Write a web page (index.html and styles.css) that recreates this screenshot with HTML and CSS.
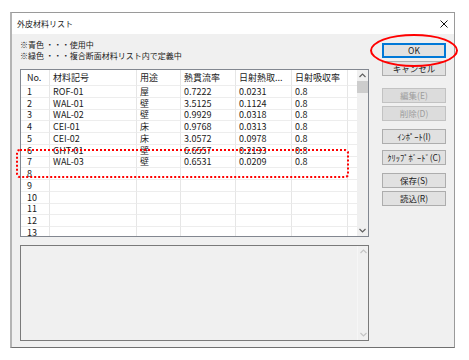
FILE: index.html
```html
<!DOCTYPE html>
<html lang="ja">
<head>
<meta charset="utf-8">
<title>外皮材料リスト</title>
<link rel="stylesheet" href="styles.css">
</head>
<body>
<div class="page">
  <div class="dialog">
    <div class="titlebar">
      <span class="title">外皮材料リスト</span>
      <svg class="close" width="8" height="8" viewBox="0 0 8 8"><path d="M0.5 0.5 L7.5 7.5 M7.5 0.5 L0.5 7.5" stroke="#111" stroke-width="1" fill="none"/></svg>
    </div>
    <div class="body">
      <div class="main">
        <div class="legend">
          <div>※青色 ・・・使用中</div>
          <div>※緑色 ・・・複合断面材料リスト内で定義中</div>
        </div>
        <div class="list">
          <div class="grid">
            <div class="c h first">No.</div><div class="c h">材料記号</div><div class="c h">用途</div><div class="c h">熱貫流率</div><div class="c h">日射熱取...</div><div class="c h">日射吸収率</div><div class="c h fill"></div>

            <div class="c first">1</div><div class="c">ROF-01</div><div class="c">屋</div><div class="c">0.7222</div><div class="c">0.0231</div><div class="c">0.8</div><div class="c fill"></div>
            <div class="c first">2</div><div class="c">WAL-01</div><div class="c">壁</div><div class="c">3.5125</div><div class="c">0.1124</div><div class="c">0.8</div><div class="c fill"></div>
            <div class="c first">3</div><div class="c">WAL-02</div><div class="c">壁</div><div class="c">0.9929</div><div class="c">0.0318</div><div class="c">0.8</div><div class="c fill"></div>
            <div class="c first">4</div><div class="c">CEI-01</div><div class="c">床</div><div class="c">0.9768</div><div class="c">0.0313</div><div class="c">0.8</div><div class="c fill"></div>
            <div class="c first">5</div><div class="c">CEI-02</div><div class="c">床</div><div class="c">3.0572</div><div class="c">0.0978</div><div class="c">0.8</div><div class="c fill"></div>
            <div class="c first">6</div><div class="c">GHT-01</div><div class="c">壁</div><div class="c">6.6557</div><div class="c">0.2133</div><div class="c">0.8</div><div class="c fill"></div>
            <div class="c first">7</div><div class="c">WAL-03</div><div class="c">壁</div><div class="c">0.6531</div><div class="c">0.0209</div><div class="c">0.8</div><div class="c fill"></div>
            <div class="c first">8</div><div class="c"></div><div class="c"></div><div class="c"></div><div class="c"></div><div class="c"></div><div class="c fill"></div>
            <div class="c first">9</div><div class="c"></div><div class="c"></div><div class="c"></div><div class="c"></div><div class="c"></div><div class="c fill"></div>
            <div class="c first">10</div><div class="c"></div><div class="c"></div><div class="c"></div><div class="c"></div><div class="c"></div><div class="c fill"></div>
            <div class="c first">11</div><div class="c"></div><div class="c"></div><div class="c"></div><div class="c"></div><div class="c"></div><div class="c fill"></div>
            <div class="c first">12</div><div class="c"></div><div class="c"></div><div class="c"></div><div class="c"></div><div class="c"></div><div class="c fill"></div>
            <div class="c first">13</div><div class="c"></div><div class="c"></div><div class="c"></div><div class="c"></div><div class="c"></div><div class="c fill"></div>
          </div>
          <div class="vscroll">
            <div class="arrow"><svg width="7" height="5" viewBox="0 0 7 5"><path d="M0.5 4 L3.5 1 L6.5 4" stroke="#606060" stroke-width="1.2" fill="none"/></svg></div>
            <div class="track"><div class="thumb"></div></div>
            <div class="arrow"><svg width="7" height="5" viewBox="0 0 7 5"><path d="M0.5 1 L3.5 4 L6.5 1" stroke="#606060" stroke-width="1.2" fill="none"/></svg></div>
          </div>
        </div>
        <div class="memo">
          <div class="vscroll off">
            <div class="arrow"><svg width="7" height="5" viewBox="0 0 7 5"><path d="M0.5 4 L3.5 1 L6.5 4" stroke="#c4c4c4" stroke-width="1.2" fill="none"/></svg></div>
            <div class="track"></div>
            <div class="arrow"><svg width="7" height="5" viewBox="0 0 7 5"><path d="M0.5 1 L3.5 4 L6.5 1" stroke="#c4c4c4" stroke-width="1.2" fill="none"/></svg></div>
          </div>
        </div>
      </div>
      <div class="buttons">
        <button class="btn default">OK</button>
        <button class="btn">キャンセル</button>
        <button class="btn disabled gap-12">編集(E)</button>
        <button class="btn disabled">削除(D)</button>
        <button class="btn gap-8">ｲﾝﾎﾟｰﾄ(I)</button>
        <button class="btn gap-6">ｸﾘｯﾌﾟﾎﾞｰﾄﾞ(C)</button>
        <button class="btn gap-8">保存(S)</button>
        <button class="btn">読込(R)</button>
      </div>
    </div>
    <div class="mark-ok"></div>
    <div class="mark-rows"></div>
  </div>
</div>
</body>
</html>
```
FILE: styles.css
```css
* { box-sizing: border-box; }
html, body { margin: 0; padding: 0; background: #fff; }
body {
  font-family: "Noto Sans CJK JP", "Noto Sans", sans-serif;
  color: #1a1a1a;
  font-weight: 400;
}
.page { padding: 12px 0 0 10px; }

.dialog {
  position: relative;
  width: 445px;
  height: 336px;
  border: 1px solid #9a9a9a;
  border-left: 2px solid #b4b4b4;
  border-bottom-color: #707070;
  background: #f0f0f0;
  display: flex;
  flex-direction: column;
}

.titlebar {
  height: 21px;
  flex: none;
  background: #fff;
  display: flex;
  align-items: center;
  justify-content: space-between;
  padding: 0 6px 0 5px;
  font-size: 8px;
  line-height: 1;
}
.close { display: block; }

.body {
  flex: 1;
  display: flex;
  padding: 5px 8px 6px 8px;
  gap: 13px;
}

.main {
  width: 349px;
  display: flex;
  flex-direction: column;
}

.legend {
  font-size: 8px;
  line-height: 11px;
  margin-bottom: 8px;
}

.list {
  height: 168px;
  flex: none;
  border: 1px solid #828790;
  background: #fff;
  display: flex;
  overflow: hidden;
}

.grid {
  width: 336px;
  display: grid;
  grid-template-columns: 29px 87px 44px 55px 56px 56px 9px;
  grid-template-rows: 16px repeat(13, 11.75px);
  align-content: start;
  overflow: hidden;
  font-size: 9px;
}

.c {
  border-right: 1px solid #e6e6e6;
  border-bottom: 1px solid #ededed;
  padding-left: 3px;
  white-space: nowrap;
  overflow: hidden;
  display: flex;
  align-items: center;
  line-height: 1;
}
.c.first { padding-left: 6px; }
.c.h { padding-left: 3px; }
.c.h.first { padding-left: 6px; }
.c.fill { border-right: none; }

.vscroll {
  width: 11px;
  flex: none;
  background: #f0f0f0;
  display: flex;
  flex-direction: column;
}
.vscroll .arrow {
  height: 11px;
  display: flex;
  align-items: center;
  justify-content: center;
}
.vscroll .track { flex: 1; }
.vscroll .thumb {
  height: 12px;
  background: #cdcdcd;
}
.vscroll.off {
  background: #f0f0f0;
  border-left: 1px solid #f6f6f6;
}

.memo {
  margin-top: 8px;
  height: 96px;
  flex: none;
  border: 1px solid #7a7a7a;
  background: #f0f0f0;
  display: flex;
  justify-content: flex-end;
}

.buttons {
  width: 64px;
  display: flex;
  flex-direction: column;
  padding-top: 4px;
}

.btn {
  height: 15px;
  margin: 3px 0 0 0;
  padding: 0;
  font-family: inherit;
  font-size: 8.5px;
  font-weight: 400;
  line-height: 1;
  color: #1a1a1a;
  background: #e1e1e1;
  border: 1px solid #adadad;
  display: flex;
  align-items: center;
  justify-content: center;
}
.btn:first-child { margin-top: 0; }
.btn.default {
  border-color: #0078d7;
  box-shadow: inset 0 0 0 1px #0078d7;
}
.btn.disabled {
  background: #dcdcdc;
  border-color: #c2c2c2;
  color: #9c9c9c;
}
.btn.gap-12 { margin-top: 12px; }
.btn.gap-8 { margin-top: 8px; }
.btn.gap-6 { margin-top: 6px; }

.mark-ok {
  position: absolute;
  left: 358px;
  top: 21px;
  width: 88px;
  height: 33px;
  border: 2px solid #f00;
  border-radius: 50%;
}
.mark-rows {
  position: absolute;
  left: 4px;
  top: 136px;
  width: 333px;
  height: 29px;
  border: 2px dotted #f00;
  border-radius: 4px;
}
```
